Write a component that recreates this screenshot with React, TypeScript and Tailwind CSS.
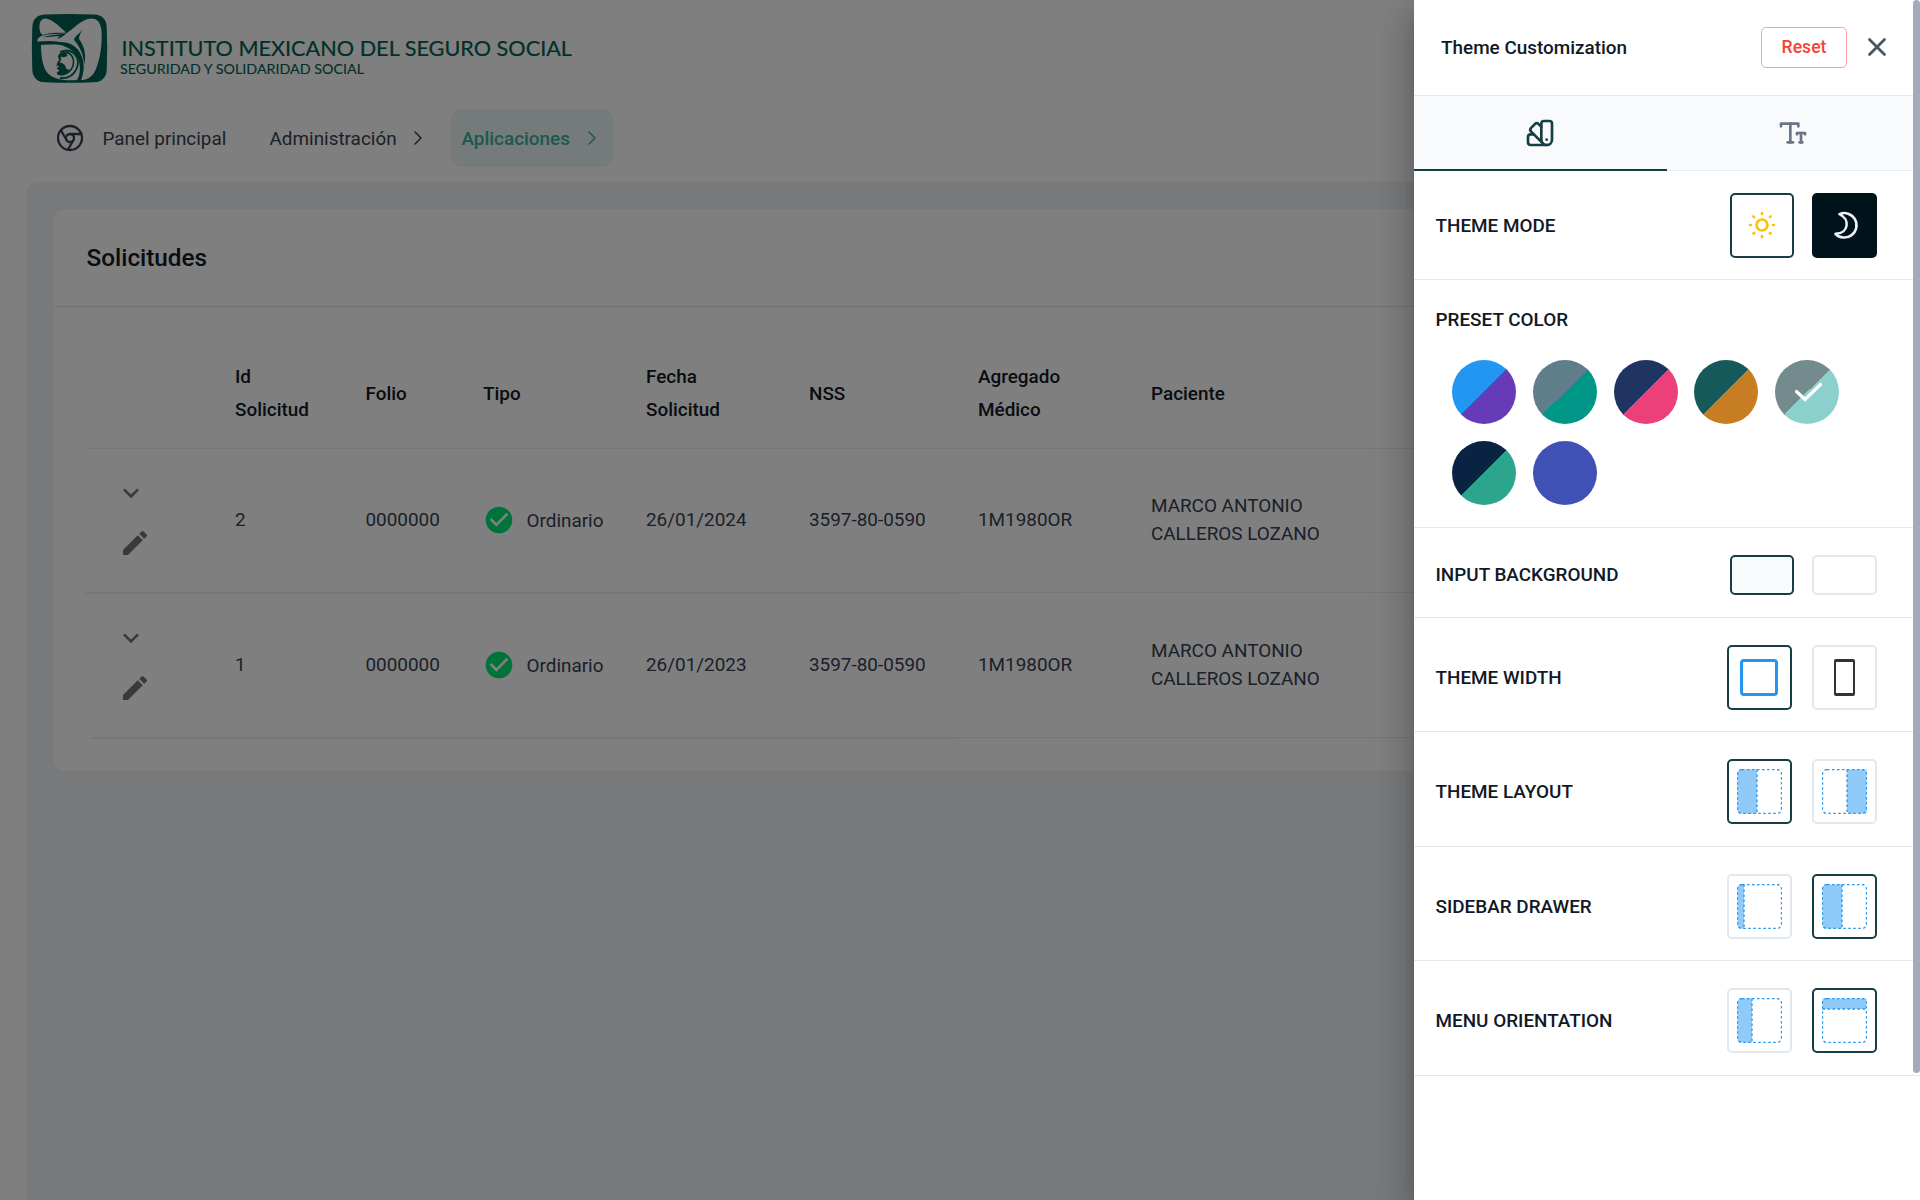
import React from 'react';
import { TbBrandChrome, TbChevronRight, TbColorSwatch, TbTextSize, TbX } from 'react-icons/tb';
import { MdCheckCircle, MdEdit, MdKeyboardArrowDown } from 'react-icons/md';

function Logo() {
  return (
    <svg width="560" height="80" viewBox="20 10 560 80" className="block">
      <path
        fill="#006152"
        d="M45 14.500Q69.500 13.500 94 14.500Q106 15 106.700 27Q107.700 48 106.700 70Q106 81.500 94 82.200Q69.500 83.200 45 82.200Q33 81.500 32.300 70Q31.400 48 32.300 27Q33 15 45 14.500Z"
      />
      <path fill="#fff" d="M40.500 33C38 25 40 18.500 45.500 18.500C53 19.500 60 27 66 32.500C57 33 48 32.500 43 35Z" />
      <path
        fill="#fff"
        d="M37.500 41.500C37 38 40 36 44 35.200C53 33 60 34.500 66.500 33.200C73 29.500 79 22 87 19.300C95 17 101 20 101.700 33C102 50 99 64 94 73C90 79 84 80.500 79.500 80C88 66 82 47 68 43C58 40.500 48 43.500 37.500 41.500Z"
      />
      <path fill="#fff" d="M41 44.500C50 45 60 43 68 46C82 51 86 66 77 80C66 80.500 53 81 46 71C42 64 41 53 41 44.500Z" />
      <path fill="#006152" d="M39 41.500C50 40 62 41.500 69 45C83 51 87 66 81 80.500L77.500 80.500C83 67 79 53 67 47.500C59 43.500 49 43.500 41 45Z" />
      <path fill="none" stroke="#006152" strokeWidth="1.800" d="M60 52C71 47 80 56 77.500 66C75 75 68 79 60 78" />
      <path fill="#006152" d="M42 37.300C49 35.300 57 34.500 66.500 33.500C62 37 60 38 57 39C58 37.500 59 37 60 36.300C53 36.300 48 37 42 37.300Z" />
      <path fill="#006152" d="M83 29C79 34 74 37 74 40C80 46 84 56 84 65C86.500 56 85 47 79 39C79 35 81 32 83 29Z" />
      <path
        fill="#006152"
        d="M59 54Q66 49.500 67.500 56Q64 58 60.500 56.500Q62 60 59.500 62.500Q65 63 66 68Q67 71 70 69Q66 77 58 75Q55 72 59.500 71L56.500 68Q60 67 58 65.500L56.500 66.500Q57 61 59.500 60Q57 57 59 54Z"
      />
      <path fill="none" stroke="#006152" strokeWidth="1.600" d="M60 54.500C68 49 75.500 56 73 66C71 71 68 74 62 75" />
      <text x="121.500" y="55.500" fontFamily="Lato" fontSize="20.300" stroke="#006152" strokeWidth=".2" fill="#006152" textLength="450.500" lengthAdjust="spacingAndGlyphs">
        INSTITUTO MEXICANO DEL SEGURO SOCIAL
      </text>
      <text x="120" y="73.500" fontFamily="Lato" fontSize="13.500" stroke="#006152" strokeWidth=".1" fill="#006152" textLength="244" lengthAdjust="spacingAndGlyphs">
        SEGURIDAD Y SOLIDARIDAD SOCIAL
      </text>
    </svg>
  );
}

const rows = [
  { id: '2', folio: '0000000', fecha: '26/01/2024', nss: '3597-80-0590', agregado: '1M1980OR' },
  { id: '1', folio: '0000000', fecha: '26/01/2023', nss: '3597-80-0590', agregado: '1M1980OR' },
];

const columns = 'grid grid-cols-[149px_130.5px_117.5px_163px_163px_169px_173px_1fr] items-center';

function RowLine({ last = false }: { last?: boolean }) {
  return (
    <div className={last ? 'ml-1.5 flex h-0.5 items-start' : 'flex h-0.5 items-start'}>
      <div className={last ? 'h-0.5 w-[863px] bg-[#ececec]' : 'h-0.5 w-[869px] bg-[#ececec]'} />
      <div className="h-px flex-1 bg-[#eaeaea]" />
    </div>
  );
}

function Page() {
  return (
    <div className="h-[1200px] bg-white pl-[27px] text-[18.900px] text-[#364152]">
      <div className="-ml-[7px] h-[109px] pt-2.5">
        <Logo />
      </div>
      <nav className="flex h-[73px] items-start">
        <div className="flex h-[58px] items-center pl-[27px]">
          <TbBrandChrome size={32} strokeWidth={1.7} />
          <span className="ml-[16.500px] w-[167px] pt-0.5">Panel principal</span>
          <span className="w-[136px] pt-0.5">Administración</span>
          <TbChevronRight size={24} strokeWidth={1.5} />
        </div>
        <div className="ml-[21.500px] flex h-[58px] w-[162px] items-center rounded-[10px] bg-[#e8f6f5] pl-[10.500px] font-medium text-[#3bb1a5]">
          <span className="w-[118px] pt-0.5">Aplicaciones</span>
          <TbChevronRight size={24} strokeWidth={1.5} />
        </div>
      </nav>
      <main className="h-[1018px] rounded-tl-[10px] bg-[#eef2f6] pl-[27px] pt-[27px]">
        <section className="h-[562px] rounded-l-[10px] bg-white">
          <h1 className="flex h-[98px] items-center border-b border-[#dfe5ec] pt-0.5 pl-[32.500px] text-[24.300px] font-medium text-[#121926]">Solicitudes</h1>
          <div className="pl-8">
            <div className={`${columns} h-[142px] border-b border-[#eaeaea] pt-8 leading-[33px] font-medium text-[#121926]`}>
              <span />
              <span className="pb-0.5">Id<br />Solicitud</span>
              <span>Folio</span>
              <span>Tipo</span>
              <span className="pb-0.5">Fecha<br />Solicitud</span>
              <span>NSS</span>
              <span className="pb-0.5">Agregado<br />Médico</span>
              <span>Paciente</span>
            </div>
            {rows.map((row, i) => (
              <div key={row.id}>
                <div className={`${columns} h-[143px] pb-px`}>
                  <span className="flex flex-col gap-[18px] pb-[5px] pl-[29px] text-[#757575]">
                    <MdKeyboardArrowDown size={32} />
                    <MdEdit size={32} className="ml-1" />
                  </span>
                  <span>{row.id}</span>
                  <span>{row.folio}</span>
                  <span className="flex items-center">
                    <MdCheckCircle size={32} color="#00e676" />
                    <span className="ml-[11.500px] pt-0.5">Ordinario</span>
                  </span>
                  <span>{row.fecha}</span>
                  <span>{row.nss}</span>
                  <span>{row.agregado}</span>
                  <span className="pb-px leading-7">MARCO ANTONIO<br />CALLEROS LOZANO</span>
                </div>
                <RowLine last={i === 1} />
              </div>
            ))}
          </div>
        </section>
      </main>
    </div>
  );
}

function Option({ active = false, children }: { active?: boolean; children?: React.ReactNode }) {
  return (
    <div className={`flex size-[65px] items-center justify-center rounded-[5px] border-2 ${active ? 'border-[#173e43]' : 'border-[#e3e8ef]'}`}>
      {children}
    </div>
  );
}

type Kind = 'left' | 'right' | 'mini' | 'menu' | 'top';

const fills: Record<Kind, { fill: string; line: string }> = {
  left: { fill: 'M20.500 1H5Q1 1 1 5V41Q1 45 5 45H20.500Z', line: 'M20.500 1V45' },
  right: { fill: 'M45 1H29Q25.500 1 25.500 5V41Q25.500 45 29 45H45Z', line: 'M25.500 1V45' },
  mini: { fill: 'M7.500 1H5Q1 1 1 5V41Q1 45 5 45H7.500Z', line: 'M7.500 1V45' },
  menu: { fill: 'M15.500 1H5Q1 1 1 5V41Q1 45 5 45H15.500Z', line: 'M15.500 1V45' },
  top: { fill: 'M1 1H45V11.500H1Z', line: 'M1 11.500H45' },
};

function LayoutIcon({ kind }: { kind: Kind }) {
  return (
    <svg width="45" height="45" viewBox="0.500 0.500 45 45" fill="none">
      <path d={fills[kind].fill} fill="#90caf9" />
      <g stroke="#2196f3" strokeWidth="1.300" strokeDasharray="2.500 2.500">
        <rect x="1" y="1" width="44" height="44" rx="4.500" />
        <path d={fills[kind].line} />
      </g>
    </svg>
  );
}

function Row({ label, className, children }: { label: string; className: string; children: React.ReactNode }) {
  return (
    <div className={`flex items-center justify-between border-b border-[#e3e8ef] pl-[21.500px] pr-[43px] ${className}`}>
      <span className="pt-0.5">{label}</span>
      <div className="flex gap-5">{children}</div>
    </div>
  );
}

const swatches = [
  'bg-[linear-gradient(135deg,#2196f3_50%,#673ab7_50%)]',
  'bg-[linear-gradient(135deg,#607d8b_50%,#009688_50%)]',
  'bg-[linear-gradient(135deg,#203461_50%,#ec407a_50%)]',
  'bg-[linear-gradient(135deg,#16595a_50%,#c77e23_50%)]',
  'bg-[linear-gradient(135deg,#748b8d_50%,#8bd0cc_50%)]',
  'bg-[linear-gradient(135deg,#0a2342_50%,#2ca58d_50%)]',
  'bg-[#3f51b5]',
];

function Drawer() {
  return (
    <aside className="absolute inset-y-0 right-0 w-[506px] bg-white text-[18.900px] font-medium text-[#121926] shadow-[0_10px_13px_-6px_rgba(0,0,0,0.2),0_20px_30px_3px_rgba(0,0,0,0.14),0_8px_38px_6px_rgba(0,0,0,0.12)]">
      <header className="flex h-24 items-center border-b border-[#e3e8ef] pl-[27px]">
        <span className="flex-1 pt-px">Theme Customization</span>
        <button className="h-[41px] w-[86px] rounded-[5px] border border-[#faa19b] text-[17.600px] font-medium text-[#f44336]">Reset</button>
        <TbX size={30} strokeWidth={2.2} className="mb-px ml-[15px] mr-7 text-[#4b5565]" />
      </header>
      <div className="grid h-[75px] grid-cols-[253px_253px] bg-[#f8fafc]">
        <div className="flex items-center justify-center border-b-2 border-[#173e43] pr-px text-[#173e43]">
          <TbColorSwatch size={32} />
        </div>
        <div className="flex items-center justify-center border-b border-[#e8edf2] pr-px text-[#697586]">
          <TbTextSize size={32} />
        </div>
      </div>
      <Row label="THEME MODE" className="h-[109px]">
        <div className="-mr-0.5 flex h-[65px] w-16 items-center justify-center rounded-[5px] border-2 border-[#173e43]">
          <svg width="32" height="32" viewBox="0 0 24 24" fill="none" stroke="#ffc107" strokeWidth="2" strokeLinecap="round">
            <circle cx="12" cy="12" r="4.100" />
            <path d="M12 3v.7M12 20.300v.7M3 12h.7M20.300 12h.7M5.600 5.600l.5.5M17.900 17.900l.5.5M5.600 18.400l.5-.5M17.900 6.100l.5-.5" />
          </svg>
        </div>
        <div className="flex size-[65px] items-center justify-center rounded-[5px] bg-[#01131a]">
          <svg width="32" height="32" viewBox="0 0 24 24" fill="none" stroke="#eef2f6" strokeWidth="1.900" strokeLinejoin="round">
            <path d="M7.800 3.800A9.200 9.200 0 1 1 4.800 18.600C15 18.300 16 7.500 7.800 3.800Z" />
          </svg>
        </div>
      </Row>
      <section className="h-[248px] border-b border-[#e3e8ef] pl-[21px] pt-[25px]">
        <div className="h-[55px] pl-[0.500px] leading-[29px]">PRESET COLOR</div>
        <div className="flex flex-wrap gap-x-[16.750px] gap-y-[17px] pl-[17.200px] pr-12">
          {swatches.map((swatch, i) => (
            <div key={swatch} className={`flex size-16 items-center justify-center rounded-full ${swatch}`}>
              {i === 4 && (
                <svg width="32" height="32" viewBox="0 0 32 32" fill="none" stroke="#fff" strokeWidth="3.200" strokeLinecap="round">
                  <path d="M5.500 15.500L14 23.500L29.500 8.500" />
                </svg>
              )}
            </div>
          ))}
        </div>
      </section>
      <Row label="INPUT BACKGROUND" className="h-[90px] pt-1">
        <div className="-mr-0.5 h-10 w-16 rounded-[5px] border-2 border-[#173e43] bg-[#f8fafc]" />
        <div className="h-10 w-[65px] rounded-[5px] border-2 border-[#e3e8ef]" />
      </Row>
      <Row label="THEME WIDTH" className="h-[114px] pt-[5px]">
        <Option active><div className="mr-px h-[37px] w-[38px] rounded-[4px] border-3 border-[#2196f3]" /></Option>
        <Option><div className="h-[37px] w-[21px] rounded-[2px] border-x-2 border-y-3 border-[#333]" /></Option>
      </Row>
      <Row label="THEME LAYOUT" className="h-[115px] pt-1">
        <Option active><LayoutIcon kind="left" /></Option>
        <Option><LayoutIcon kind="right" /></Option>
      </Row>
      <Row label="SIDEBAR DRAWER" className="h-[114px] pt-[5px]">
        <Option><LayoutIcon kind="mini" /></Option>
        <Option active><LayoutIcon kind="left" /></Option>
      </Row>
      <Row label="MENU ORIENTATION" className="h-[115px] pt-1">
        <Option><LayoutIcon kind="menu" /></Option>
        <Option active><LayoutIcon kind="top" /></Option>
      </Row>
      <div className="absolute top-0 right-0 h-[1073px] w-[7px] rounded-full bg-[#a3abb8]" />
    </aside>
  );
}

export default function App() {
  return (
    <div className="relative h-[1200px] w-[1920px] overflow-hidden font-['Roboto',sans-serif]">
      <Page />
      <div className="absolute inset-0 bg-black/50" />
      <Drawer />
    </div>
  );
}
